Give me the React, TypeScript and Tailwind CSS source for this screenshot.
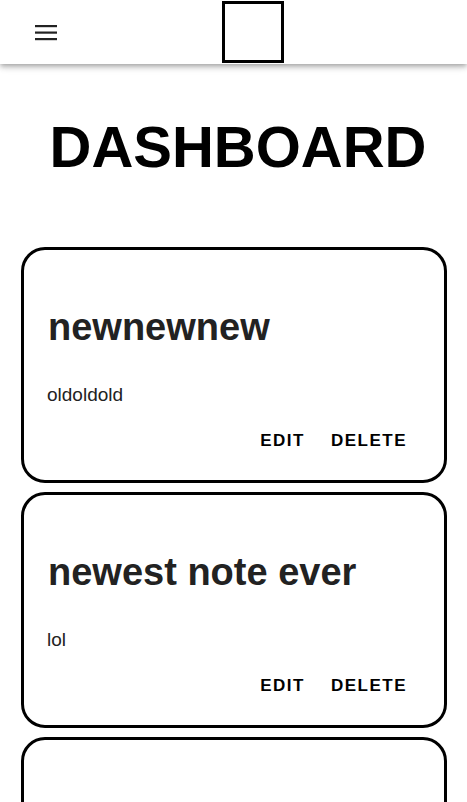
import React from "react";

const notes = [
  { title: "newnewnew", body: "oldoldold" },
  { title: "newest note ever", body: "lol" },
  { title: "", body: "" },
];

function Card({ title, body }: { title: string; body: string }) {
  return (
    <div className="ml-[21px] mr-[20px] mb-[9px] rounded-[24px] border-[3px] border-black bg-white pt-[54px] pb-[27px]">
      <div className="pl-[24px] text-[38px] leading-[46px] font-bold text-[#222222]">{title}</div>
      <div className="mt-[31px] pl-[23px] text-[19px] leading-[27px] text-[#222222]">{body}</div>
      <div className="mt-[21px] flex justify-end gap-[26px] pr-[37px] text-[17px] leading-[24px] font-bold tracking-[1.5px] text-black">
        <span>EDIT</span>
        <span>DELETE</span>
      </div>
    </div>
  );
}

export default function App() {
  return (
    <div className="min-h-[802px] bg-white" style={{ fontFamily: '"Liberation Sans", Arial, sans-serif' }}>
      <header className="relative z-10 flex h-[64px] items-center bg-white pl-[35px] shadow-[0_2px_4px_-1px_rgba(0,0,0,0.2),0_4px_5px_0_rgba(0,0,0,0.14),0_1px_10px_0_rgba(0,0,0,0.12)]">
        <svg width="22" height="16" viewBox="0 0 22 16" className="mt-[1px]">
          <rect x="0" y="0" width="22" height="2.2" fill="#222" />
          <rect x="0" y="6.5" width="22" height="2.2" fill="#222" />
          <rect x="0" y="13" width="22" height="2.2" fill="#222" />
        </svg>
        <div className="ml-[165px] h-[62px] w-[62px] border-[3px] border-black" />
      </header>
      <h1 className="mt-[47px] pl-[9px] text-center text-[58px] leading-[72px] font-bold text-black">DASHBOARD</h1>
      <div className="mt-[64px]">
        {notes.map((n, i) => (
          <Card key={i} title={n.title} body={n.body} />
        ))}
      </div>
    </div>
  );
}
